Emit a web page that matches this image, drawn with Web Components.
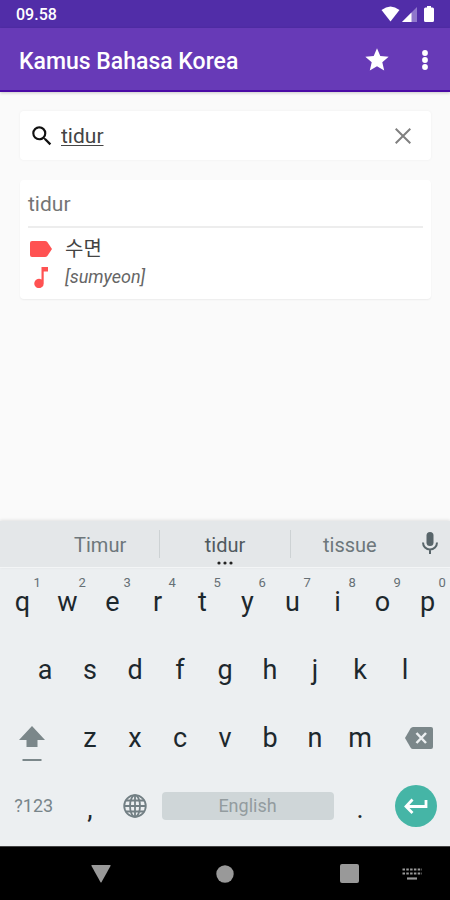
<!DOCTYPE html>
<html lang="id">
<head>
<meta charset="utf-8">
<meta name="viewport" content="width=device-width, initial-scale=1">
<title>Kamus Bahasa Korea</title>
<style>
  html, body { margin: 0; }
  body { font-family: Roboto, "Noto Sans CJK KR", sans-serif; background: #fafafa; }
</style>
</head>
<body>
<kamus-app></kamus-app>
<script>
const reset = `
  *, *::before { box-sizing: border-box; }
  button, input { font: inherit; color: inherit; background: none; border: 0; padding: 0; margin: 0; }
  button { display: grid; place-items: center; cursor: pointer; }
  svg { display: block; }
`;
const define = (name, css, html) => {
  customElements.define(name, class extends HTMLElement {
    constructor() {
      super();
      this.attachShadow({ mode: 'open' }).innerHTML =
        `<style>${reset}${css}</style>` + (typeof html === 'function' ? html(this) : html);
    }
  });
};

define('status-bar', `
  :host { display: flex; justify-content: space-between; align-items: center; height: 28px;
    padding: 0 16px; background: #512da8; color: #fff; font-size: 16px; font-weight: 500; line-height: 28px; }
  span { padding-top: 2px; }
  div { display: flex; align-items: center; }
  .cell { margin: 0 7px 0 2px; }
`, `
  <span>09.58</span>
  <div>
    <svg width="19" height="16" viewBox="0 0 19 16" fill="#fff"><path d="M0.5 4Q9.500-3 18.500 4L9.500 15.500Z"/></svg>
    <svg class="cell" width="15" height="16" viewBox="0 0 15 16"><path d="M15 1V16H0Z" fill="#8f77cb"/><path d="M9.500 6.500V16H0Z" fill="#fff"/></svg>
    <svg width="10" height="16" viewBox="0 0 10 16" fill="#fff"><path d="M3 0H7V1.500H8.500Q10 1.500 10 3V14.500Q10 16 8.500 16H1.500Q0 16 0 14.500V3Q0 1.500 1.500 1.500H3Z"/></svg>
  </div>
`);

define('app-bar', `
  :host { display: flex; align-items: center; height: 64px; padding: 2px 10px 0 19px; gap: 18px;
    background: #673ab7; border-bottom: 2px solid #4a0aa5; color: #fff; box-shadow: 0 1px 3px #0003; box-sizing: border-box; }
  h1 { flex: 1; margin: 0; padding-top: 3px; font-size: 23px; font-weight: 500; line-height: 32px; }
  button { width: 30px; height: 48px; }
`, `
  <h1><slot></slot></h1>
  <button aria-label="Favorit"><svg width="28" height="28" viewBox="0 0 24 24" fill="#fff"><path d="M12 17.270 18.180 21l-1.640-7.030L22 9.240l-7.190-.61L12 2 9.190 8.630 2 9.240l5.460 4.730L5.820 21z"/></svg></button>
  <button aria-label="Menu lainnya"><svg width="8" height="22" viewBox="0 0 8 22" fill="#fff"><circle cx="4" cy="4" r="2.900"/><circle cx="4" cy="11" r="2.900"/><circle cx="4" cy="18" r="2.900"/></svg></button>
`);

define('search-box', `
  :host { display: block; }
  label { display: flex; align-items: center; height: 49px; padding: 0 16px 0 9px; gap: 6px;
    background: #fff; border-radius: 4px; box-shadow: 0 0 3px #0000000d; }
  input { flex: 1; min-width: 0; height: 32px; font-size: 21px; color: #444; outline: 0;
    text-decoration: underline; text-decoration-thickness: 1px; text-underline-offset: 2px; }
  button { width: 24px; height: 32px; }
`, `
  <label>
    <svg width="26" height="26" viewBox="0 0 24 24" fill="#111"><path d="M15.500 14h-.79l-.28-.27A6.471 6.471 0 0 0 16 9.500 6.500 6.500 0 1 0 9.500 16c1.610 0 3.090-.59 4.230-1.570l.27.28v.79l5 4.990L20.490 19l-4.990-5zm-6 0C7.010 14 5 11.990 5 9.500S7.010 5 9.500 5 14 7.010 14 9.500 11.990 14 9.500 14z"/></svg>
    <input type="text" value="tidur" aria-label="Cari kata">
    <button aria-label="Hapus"><svg width="16" height="16" viewBox="0 0 16 16" stroke="#808080" stroke-width="2" fill="none"><path d="M0.700 0.700 15.300 15.300M15.300 0.700 0.700 15.300"/></svg></button>
  </label>
`);

define('result-card', `
  :host { display: block; padding: 8px; background: #fff; border-radius: 4px; box-shadow: 0 1px 2px #0000000f; }
  h2 { margin: 0; padding-bottom: 6px; border-bottom: 2px solid #ededed; color: #757575;
    font-size: 21px; font-weight: 400; line-height: 32px; }
  .row { display: grid; grid-template-columns: 26px 1fr; column-gap: 11px; align-items: center; height: 28px; }
  .rows { padding-top: 7px; }
  .row svg { margin: auto; }
  .word { font-size: 20px; line-height: 28px; color: #444; }
  .sound { font-size: 18px; line-height: 28px; color: #666; font-style: italic; }
`, `
  <h2><slot name="term"></slot></h2>
  <div class="rows">
    <div class="row">
      <svg width="22" height="16" viewBox="0 0 22 16" fill="#ff5252"><path d="M2 0H15Q16.500 0 17.300 1L22 8L17.300 15Q16.500 16 15 16H2Q0 16 0 14V2Q0 0 2 0Z"/></svg>
      <span class="word"><slot name="word"></slot></span>
    </div>
    <div class="row">
      <svg width="14" height="21" viewBox="0 0 14 21" fill="#ff5252"><path d="M7.500 0H14V4.500H9.700V16.500A4.700 4.700 0 1 1 7.500 12.500Z"/></svg>
      <span class="sound"><slot name="sound"></slot></span>
    </div>
  </div>
`);

define('suggestion-strip', `
  :host { display: grid; grid-template-columns: 41px 9fr 10fr 9fr 41px; align-items: center; height: 47px;
    background: #e4e7e9; border-bottom: 1px solid #f3f5f6; color: #6d777b; font-size: 20px; box-shadow: 0 -1px 3px #0000001a; }
  button { position: relative; height: 28px; padding-top: 2px; }
  .main { border: solid #cdd2d4; border-width: 0 1px; color: #505a5f; }
  .main svg { position: absolute; bottom: -7px; left: 50%; margin-left: -9px; }
  .mic { padding: 0 0 2px; }
`, `
  <span></span>
  <button>Timur</button>
  <button class="main">tidur<svg width="18" height="4" viewBox="0 0 18 4" fill="#222"><circle cx="3" cy="2" r="1.600"/><circle cx="9" cy="2" r="1.600"/><circle cx="15" cy="2" r="1.600"/></svg></button>
  <button>tissue</button>
  <button class="mic" aria-label="Input suara"><svg width="16" height="22" viewBox="0 0 16 22"><rect x="4.500" y="0" width="7" height="14" rx="3.500" fill="#58656a"/><path d="M1 10.500A7 7 0 0 0 15 10.500M8 17.500V22" fill="none" stroke="#58656a" stroke-width="2"/></svg></button>
`);

define('key-cap', `
  :host { display: block; grid-column: span var(--span, 2); }
  button { position: relative; width: 100%; height: 100%; font-size: 27px; line-height: 32px; color: #1d282d; }
  sup { position: absolute; top: 8px; left: calc(50% + 11px); font-size: 13px; line-height: 14px; color: #667075; }
  :host([tone="soft"]) button { font-size: 18px; color: #78858a; }
  :host([tone="space"]) button { height: 28px; margin: 20px 0; width: calc(100% - 8px); margin-inline: 4px;
    border-radius: 4px; background: #cfd6d8; color: #939c9f; font-size: 18px; line-height: 28px; }
  :host([tone="low"]) button { padding-top: 6px; }
  :host([tone="shift"]) button { padding: 12px 4px 0 0; }
  :host([tone="delete"]) button { padding: 0 0 0 5px; }
  :host([tone="enter"]) button { width: 42px; height: 42px; margin: 13px auto; border-radius: 50%; background: #45b5a6; }
`, el => `<button${el.title ? ` aria-label="${el.title}"` : ''}>${el.getAttribute('hint') ? `<sup>${el.getAttribute('hint')}</sup>` : ''}<slot></slot></button>`);

const keys = (letters, hints = '') => [...letters].map((c, i) =>
  `<key-cap${hints ? ` hint="${hints[i]}"` : ''}>${c}</key-cap>`).join('');

define('soft-keyboard', `
  :host { display: block; background: #eceff1; }
  .keys { padding: 0 0 6px; }
  .row { display: grid; grid-template-columns: repeat(20, 1fr); height: 68px; }
  .inset::before { content: ""; }
  .wide { --span: 3; }
  .space { --span: 8; }
`, `
  <suggestion-strip></suggestion-strip>
  <div class="keys">
    <div class="row">${keys('qwertyuiop', '1234567890')}</div>
    <div class="row inset">${keys('asdfghjkl')}</div>
    <div class="row">
      <key-cap class="wide" tone="shift" title="Shift"><svg width="26" height="36" viewBox="0 0 26 36" fill="#7b878a"><path d="M13 0 26 14H18.500V21H7.500V14H0ZM3.500 33H22.500V35H3.500Z"/></svg></key-cap>
      ${keys('zxcvbnm')}
      <key-cap class="wide" tone="delete" title="Hapus huruf"><svg width="28" height="22" viewBox="0 0 28 22"><path d="M8 0H26Q28 0 28 2V20Q28 22 26 22H8Q6.500 22 5.500 20.500L0 11L5.500 1.500Q6.500 0 8 0Z" fill="#7b878a"/><path d="M11.500 6 21 16M21 6 11.500 16" stroke="#eceff1" stroke-width="2.500"/></svg></key-cap>
    </div>
    <div class="row">
      <key-cap class="wide" tone="soft">?123</key-cap>
      <key-cap tone="low">,</key-cap>
      <key-cap title="Ganti bahasa"><svg width="24" height="24" viewBox="0 0 24 24" fill="none" stroke="#727f84" stroke-width="1.800"><circle cx="12" cy="12" r="10.800"/><ellipse cx="12" cy="12" rx="5" ry="10.800"/><path d="M12 1V23M1 12H23M3 6.500H21M3 17.500H21"/></svg></key-cap>
      <key-cap class="space" tone="space">English</key-cap>
      <key-cap tone="low">.</key-cap>
      <key-cap class="wide" tone="enter" title="Enter"><svg width="24" height="16" viewBox="0 0 24 16" fill="none" stroke="#fff" stroke-width="2.800"><path d="M22 2V8.500H2.500M8.500 1.500 2 8.500 8.500 15"/></svg></key-cap>
    </div>
  </div>
`);

define('nav-bar', `
  :host { display: grid; grid-template-columns: 39px 1fr 1fr 1fr 39px; height: 54px; background: #000; border-top: 1px solid #444; box-sizing: border-box; }
  button { height: 53px; }
  .ime { justify-content: start; margin-left: -9px; }
`, `
  <span></span>
  <button aria-label="Kembali"><svg width="20" height="18" viewBox="0 0 20 18" fill="#999"><path d="M1 0H19Q20 0 19.500 1L10.600 17Q10 18 9.400 17L0.500 1Q0 0 1 0Z"/></svg></button>
  <button aria-label="Beranda"><svg width="18" height="18" viewBox="0 0 18 18" fill="#999"><circle cx="9" cy="9" r="8.700"/></svg></button>
  <button aria-label="Terkini"><svg width="19" height="19" viewBox="0 0 19 19" fill="#999"><rect width="19" height="19" rx="2"/></svg></button>
  <button class="ime" aria-label="Pilih keyboard"><svg width="20" height="12" viewBox="0 0 20 12" stroke="#999" stroke-width="2.200"><path d="M0.500 1.500H20M0.500 5.500H20" stroke-dasharray="2.500 1.300"/><path d="M5 10.500H15"/></svg></button>
`);

define('kamus-app', `
  :host { display: flex; flex-direction: column; min-height: 100vh; background: #fafafa; }
  main { flex: 1; display: flex; flex-direction: column; gap: 20px; padding: 19px 19px 19px 20px; }
`, `
  <status-bar></status-bar>
  <app-bar>Kamus Bahasa Korea</app-bar>
  <main>
    <search-box></search-box>
    <result-card>
      <span slot="term">tidur</span>
      <span slot="word" lang="ko">수면</span>
      <span slot="sound">[sumyeon]</span>
    </result-card>
  </main>
  <soft-keyboard></soft-keyboard>
  <nav-bar></nav-bar>
`);
</script>
</body>
</html>
